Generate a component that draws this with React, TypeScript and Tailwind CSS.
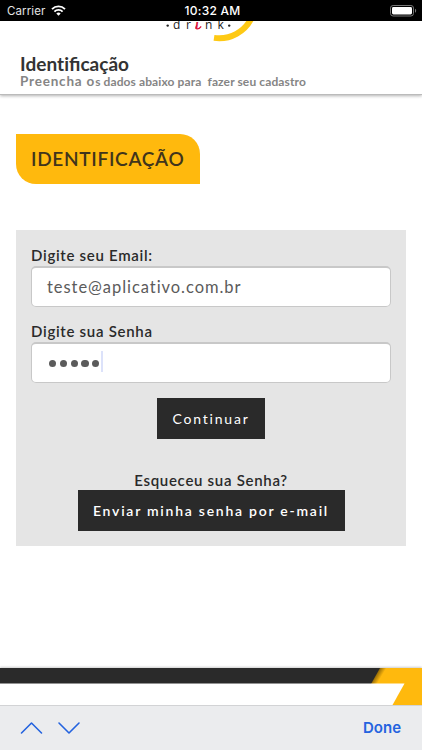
import type { ReactNode } from 'react';

function StatusBar() {
  return (
    <div className="grid h-[21px] shrink-0 grid-cols-3 items-center bg-black font-['Inter',sans-serif] text-[12px] leading-[21px] text-white">
      <div className="flex items-center gap-[6px] pl-[7px]">
        <span className="pt-px text-[11.5px] leading-[20px] tracking-[0.1px] text-[#e4e4e4]">Carrier</span>
        <svg width="15" height="11" viewBox="0 0 15 11" fill="none" stroke="#fff" strokeWidth="1.9">
          <path d="M1 4.1a9.2 9.2 0 0 1 13 0" />
          <path d="M3.4 6.6a5.8 5.8 0 0 1 8.2 0" />
          <path d="M7.5 10.7 5.3 8.5a3.1 3.1 0 0 1 4.4 0z" fill="#fff" stroke="none" />
        </svg>
      </div>
      <span className="pl-[3px] text-center leading-[20px] font-medium tracking-[0.25px] whitespace-nowrap">10:32 AM</span>
      <div className="flex justify-end pr-[5px]">
        <svg width="27" height="12" viewBox="0 0 27 12">
          <rect x="0.5" y="0.5" width="23" height="10.5" rx="2.6" fill="none" stroke="#777" />
          <rect x="2" y="2" width="20" height="7.5" rx="1.4" fill="#fff" />
          <path d="M25 3.8v4c1.6-.6 1.6-3.4 0-4z" fill="#777" />
        </svg>
      </div>
    </div>
  );
}

function Logo() {
  return (
    <svg className="block" width="422" height="28" viewBox="0 21 422 28">
      <path d="M214 37.9A36 36 0 0 0 252 17" fill="none" stroke="#fec914" strokeWidth="6" />
      <circle cx="167.7" cy="25.6" r="1.2" fill="#222" />
      <circle cx="229.2" cy="25.6" r="1.2" fill="#222" />
      <g fontFamily="Open Sans, sans-serif" fontSize="12" fill="#222">
        <text x="173" y="29">d</text>
        <text x="186" y="29">r</text>
        <text x="205" y="29">n</text>
        <text x="217.6" y="29">k</text>
      </g>
      <text x="195.2" y="29" fontFamily="Lato, sans-serif" fontSize="14" fontStyle="italic" fontWeight="700" fill="#dc1439">
        i
      </text>
      <path d="M196.6 25.8q-1.6 2.8.4 3 2.2.2 3.8-2" fill="none" stroke="#dc1439" strokeWidth="1.3" strokeLinecap="round" />
    </svg>
  );
}

function Header() {
  return (
    <header className="h-[74px] shrink-0 border-b border-[#bbb] bg-white shadow-[0_1px_3px_rgba(0,0,0,0.3)]">
      <Logo />
      <div className="pt-[5px] pl-5 whitespace-nowrap">
        {/* the tracked span keeps "ti" from joining into a ligature */}
        <h1 className="text-[19px] leading-[20px] font-bold text-[#333]">
          <span className="tracking-[0.05px]">Ident</span>ificação
        </h1>
        <p className="text-[12px] leading-[14px] font-bold tracking-[0.11px] text-[#858585]">
          <span className="text-[13.5px] leading-[14px] tracking-[0.8px]">Preencha o</span>
          s dados abaixo para&nbsp; fazer seu cadastro
        </p>
      </div>
    </header>
  );
}

function Field({ label, children }: { label: string; children: ReactNode }) {
  return (
    <label className="block">
      <span className="block h-[21px] text-[15px] leading-[21px] font-semibold tracking-[0.7px]">{label}</span>
      <span className="flex h-[41px] items-center rounded-[5px] border border-t-2 border-[#c8c8c8] bg-white px-[15px] text-[#5b5b5b]">
        {children}
      </span>
    </label>
  );
}

function LoginForm() {
  return (
    <section className="mx-4 mt-[46px] h-[316px] shrink-0 bg-[#e5e5e5] px-[15px] pt-[15px] text-[#2a2a2a]">
      <Field label="Digite seu Email:">
        <span className="text-[16.5px] tracking-[0.95px]">teste@aplicativo.com.br</span>
      </Field>
      <div className="h-[14px]" />
      <Field label="Digite sua Senha">
        <span className="mt-px ml-[2px] flex items-center gap-[3.6px]">
          {[0, 1, 2, 3, 4].map((dot) => (
            <span key={dot} className="size-[7.2px] rounded-full bg-[#5b5b5b]" />
          ))}
        </span>
        <span className="-mt-[3px] ml-[1.5px] h-[21px] w-[2px] bg-[#dce2fa]" />
      </Field>
      <div className="flex flex-col items-center">
        <button className="mt-[15px] h-[41px] w-[108px] bg-[#2a2a2a] text-[14px] tracking-[1.8px] text-white">
          Continuar
        </button>
        <p className="mt-[31px] h-[20px] text-[15px] leading-[20px] font-semibold tracking-[0.7px]">Esqueceu sua Senha?</p>
        <button className="h-[41px] w-[267px] bg-[#2a2a2a] text-[14px] font-semibold tracking-[1.75px] whitespace-nowrap text-white">
          Enviar minha senha por e-mail
        </button>
      </div>
    </section>
  );
}

function FooterStripe() {
  return (
    <div className="mt-auto h-[37px] shrink-0 shadow-[0_-1px_2px_rgba(0,0,0,0.2)]">
      <svg className="block" width="422" height="37" viewBox="0 0 422 37">
        <defs>
          <linearGradient id="edge" gradientUnits="userSpaceOnUse" x1="375" y1="8" x2="380" y2="11">
            <stop offset="0" stopColor="#000" stopOpacity="0.45" />
            <stop offset="1" stopColor="#000" stopOpacity="0" />
          </linearGradient>
        </defs>
        <rect width="422" height="37" fill="#ffb90d" />
        <path d="M370 0H388L378 16H365z" fill="url(#edge)" />
        <path d="M0 0H380L371 16H0z" fill="#2a2a2a" />
        <path d="M0 15.5H404.5L392.5 37H0z" fill="#fff" />
        <path d="M0 15.5H371" stroke="#929292" />
      </svg>
    </div>
  );
}

function KeyboardToolbar() {
  return (
    <div className="flex h-[45px] shrink-0 items-center justify-between border-t border-[#d2d3d5] bg-[#ebecee] pr-[21px] pl-[20px]">
      <svg width="61" height="14" viewBox="0 0 61 14" fill="none" stroke="#2463df" strokeWidth="1.6" strokeLinecap="round" strokeLinejoin="round">
        <path d="M1.5 12 11.5 2l10 10" />
        <path d="M39 2l10 10L59 2" />
      </svg>
      <span className="pt-px font-['Inter',sans-serif] text-[15px] font-semibold text-[#2463df]">Done</span>
    </div>
  );
}

export default function App() {
  return (
    <main className="flex h-[750px] w-[422px] flex-col overflow-hidden bg-white font-['Lato',sans-serif]">
      <StatusBar />
      <Header />
      <h2 className="mt-[39px] ml-[16px] flex h-[50px] w-[184px] shrink-0 items-center rounded-tr-[20px] rounded-bl-[20px] bg-[#ffb90d] pt-px pl-[15px] text-[19px] font-semibold tracking-[0.7px] text-[#41351c]">
        IDENTIFICAÇÃO
      </h2>
      <LoginForm />
      <FooterStripe />
      <KeyboardToolbar />
    </main>
  );
}
